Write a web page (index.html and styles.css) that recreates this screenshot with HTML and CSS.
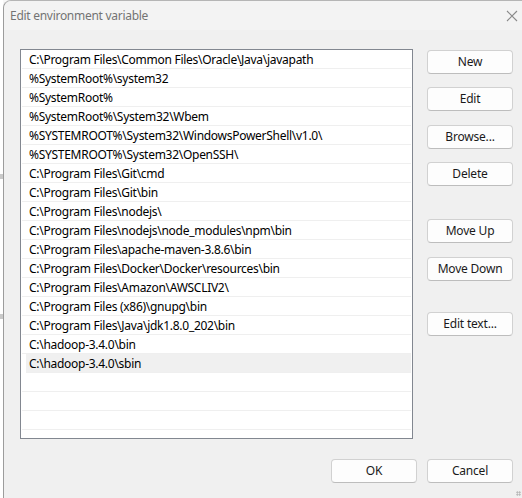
FILE: index.html
```html
<!DOCTYPE html>
<html>
<head>
<meta charset="utf-8">
<link rel="stylesheet" href="styles.css">
</head>
<body>
<div class="desktop">
  <div class="behind"></div>
  <div class="window">
    <div class="titlebar">
      <span class="title">Edit environment variable</span>
      <span class="close">
        <svg width="12" height="12" viewBox="0 0 12 12"><path d="M1 1 L11 11 M11 1 L1 11" stroke="#8a8a8a" stroke-width="1.1" fill="none"/></svg>
      </span>
    </div>
    <div class="content">
      <div class="main">
        <div class="list">
          <div class="row">C:\Program Files\Common Files\Oracle\Java\javapath</div>
          <div class="row">%SystemRoot%\system32</div>
          <div class="row">%SystemRoot%</div>
          <div class="row">%SystemRoot%\System32\Wbem</div>
          <div class="row">%SYSTEMROOT%\System32\WindowsPowerShell\v1.0\</div>
          <div class="row">%SYSTEMROOT%\System32\OpenSSH\</div>
          <div class="row">C:\Program Files\Git\cmd</div>
          <div class="row">C:\Program Files\Git\bin</div>
          <div class="row">C:\Program Files\nodejs\</div>
          <div class="row">C:\Program Files\nodejs\node_modules\npm\bin</div>
          <div class="row">C:\Program Files\apache-maven-3.8.6\bin</div>
          <div class="row">C:\Program Files\Docker\Docker\resources\bin</div>
          <div class="row">C:\Program Files\Amazon\AWSCLIV2\</div>
          <div class="row">C:\Program Files (x86)\gnupg\bin</div>
          <div class="row">C:\Program Files\Java\jdk1.8.0_202\bin</div>
          <div class="row">C:\hadoop-3.4.0\bin</div>
          <div class="row selected">C:\hadoop-3.4.0\sbin</div>
          <div class="row"></div>
          <div class="row"></div>
          <div class="row"></div>
        </div>
        <div class="side">
          <button class="btn">New</button>
          <button class="btn g13">Edit</button>
          <button class="btn g14">Browse...</button>
          <button class="btn g13">Delete</button>
          <button class="btn g33">Move Up</button>
          <button class="btn g14">Move Down</button>
          <button class="btn g31">Edit text...</button>
        </div>
      </div>
      <div class="footer">
        <button class="btn">OK</button>
        <button class="btn">Cancel</button>
      </div>
    </div>
    <div class="grip"></div>
  </div>
</div>
</body>
</html>
```

FILE: styles.css
```css
html, body {
  margin: 0;
  padding: 0;
  width: 522px;
  height: 498px;
  overflow: hidden;
}
body {
  font-family: "Noto Sans", "Open Sans", sans-serif;
  font-size: 12px;
  letter-spacing: -0.28px;
  color: #000;
}
.desktop {
  display: flex;
  width: 522px;
  height: 498px;
  background: #f7f7f7;
}
.behind {
  width: 3px;
  flex: none;
  background: linear-gradient(#fff 0 35%, #c9c9c9 35% 36%, #fff 36% 63%, #c9c9c9 63% 64%, #fff 64%);
}
.window {
  position: relative;
  flex: 1;
  display: flex;
  flex-direction: column;
  border-left: 1px solid #9c9c9c;
  border-top: 1px solid #b5b5b5;
  border-top-left-radius: 8px;
  background: #f0f0f0;
  box-sizing: border-box;
}
.titlebar {
  height: 29px;
  flex: none;
  display: flex;
  align-items: center;
  justify-content: space-between;
  padding-left: 6px;
  padding-right: 4px;
  background: #f3f3f3;
  border-top-left-radius: 8px;
}
.title {
  color: #737373;
  font-size: 12px;
}
.close {
  display: flex;
  width: 12px;
  height: 12px;
}
.content {
  flex: 1;
  display: flex;
  flex-direction: column;
  padding: 19px 9px 0 16px;
}
.main {
  display: flex;
  gap: 14px;
}
.list {
  width: 393px;
  height: 390px;
  box-sizing: border-box;
  border: 1px solid #828790;
  background: #fff;
  padding: 0 1px;
  overflow: hidden;
}
.row {
  height: 19px;
  box-sizing: border-box;
  border-bottom: 1px solid #efefef;
  padding-left: 7px;
  padding-top: 1px;
  line-height: 18px;
  white-space: nowrap;
}
.row.selected {
  background: #f0f0f0;
  margin-left: 4px;
  padding-left: 3px;
}
.side {
  display: flex;
  flex-direction: column;
  padding-top: 1px;
}
.btn {
  width: 86px;
  height: 24px;
  box-sizing: border-box;
  background: #fdfdfd;
  border: 1px solid #d1d1d1;
  border-bottom-color: #bdbdbd;
  border-radius: 4px;
  font-family: "Noto Sans", "Open Sans", sans-serif;
  font-size: 12px;
  letter-spacing: -0.2px;
  color: #1a1a1a;
  padding: 0;
  line-height: 20px;
}
.g13 { margin-top: 13px; }
.g14 { margin-top: 14px; }
.g31 { margin-top: 31px; }
.g33 { margin-top: 33px; }
.footer {
  display: flex;
  justify-content: flex-end;
  gap: 10px;
  margin-top: 20px;
}
.grip {
  position: absolute;
  right: 1px;
  bottom: 2px;
  width: 5px;
  height: 5px;
  background:
    radial-gradient(circle, #b0b0b0 0.8px, transparent 1px) 0 0 / 2.5px 2.5px;
}
```
